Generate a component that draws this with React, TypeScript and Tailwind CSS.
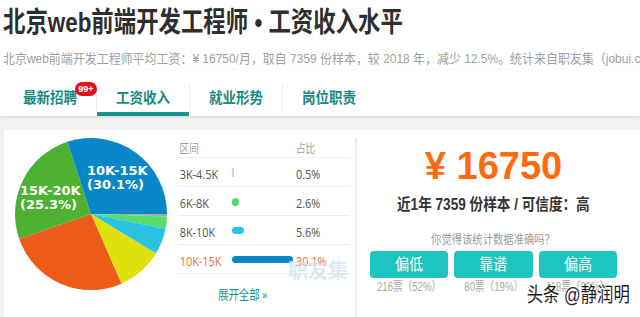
const slices = [
  { a0: 0, a1: 1.8, color: '#a9a9a9' },
  { a0: 1.8, a1: 11.2, color: '#58dc6b' },
  { a0: 11.2, a1: 31.4, color: '#2ac4e2' },
  { a0: 31.4, a1: 66.4, color: '#dfe00c' },
  { a0: 66.4, a1: 160.7, color: '#ee5a18' },
  { a0: 160.7, a1: 251.8, color: '#4db232' },
  { a0: 251.8, a1: 360, color: '#0a87c8' },
];

function slicePath(cx: number, cy: number, r: number, a0: number, a1: number) {
  const rad = (d: number) => (d * Math.PI) / 180;
  const x0 = cx + r * Math.cos(rad(a0));
  const y0 = cy + r * Math.sin(rad(a0));
  const x1 = cx + r * Math.cos(rad(a1));
  const y1 = cy + r * Math.sin(rad(a1));
  const large = a1 - a0 > 180 ? 1 : 0;
  return `M${cx},${cy} L${x0},${y0} A${r},${r} 0 ${large} 1 ${x1},${y1} Z`;
}

const rows = [
  { range: '3K-4.5K', pct: '0.5%', bar: 'w-[2px] h-[9px] bg-[#f0cbb4]', hot: false },
  { range: '6K-8K', pct: '2.6%', bar: 'w-[7px] h-[8px] rounded-full bg-[#58d86a]', hot: false },
  { range: '8K-10K', pct: '5.6%', bar: 'w-[12px] h-[7px] rounded-full bg-[#2ac4e4]', hot: false },
  { range: '10K-15K', pct: '30.1%', bar: 'w-[61px] h-[7px] rounded-full bg-[#0b87c9]', hot: true },
];

const votes = [
  { label: '偏低', count: '216票（52%）' },
  { label: '靠谱', count: '80票（19%）' },
  { label: '偏高', count: '118票（29%）' },
];

function Pie() {
  return (
    <svg width="152" height="152" viewBox="0 0 152 152">
      {slices.map((s) => (
        <path key={s.a0} d={slicePath(76, 76, 76, s.a0, s.a1)} fill={s.color} />
      ))}
      <g fill="#fff" fontFamily="DejaVu Sans" fontWeight="bold" fontSize="13">
        <text x="72" y="37">10K-15K</text>
        <text x="72" y="51">(30.1%)</text>
        <text x="5" y="57">15K-20K</text>
        <text x="5" y="71">(25.3%)</text>
      </g>
    </svg>
  );
}

export default function App() {
  return (
    <div className="h-[317px] w-[640px] overflow-hidden bg-white flex flex-col font-['Liberation_Sans','Noto_Sans_CJK_SC',sans-serif]">
      {/* Heading */}
      <div className="h-[46px] shrink-0 flex items-center pl-[3px] whitespace-nowrap">
        <h1 className="inline-block origin-left scale-x-[0.8] text-[28px] leading-none font-bold text-[#2e2e2e]">
          北京web前端开发工程师 • 工资收入水平
        </h1>
      </div>
      <div className="h-[24px] shrink-0 flex items-center pl-[3px] whitespace-nowrap">
        <p className="inline-block origin-left scale-x-[0.92] text-[13px] leading-none text-[#a0a0a0]">
          北京web前端开发工程师平均工资：¥ 16750/月，取自 7359 份样本，较 2018 年，减少 12.5%。统计来自职友集（jobui.com）
        </p>
      </div>

      {/* Tabs */}
      <div className="h-[46px] shrink-0 flex items-end pl-[4px] bg-white relative z-10 shadow-[0_1px_3px_rgba(0,0,0,0.12)]">
        <div className="relative w-[92px] h-full flex items-center justify-center pt-[15px] border-b-4 border-transparent">
          <span className="inline-block scale-x-[0.9] text-[15px] font-bold text-[#178a84]">最新招聘</span>
          <span className="absolute left-[71px] top-[12px] h-[14px] w-[22px] rounded-full bg-[#e50f16] text-white text-[9px] font-bold leading-[14px] text-center">
            99+
          </span>
        </div>
        <div className="w-px h-[27px] mb-[4px] bg-[#ebebeb]" />
        <div className="w-[92px] h-full flex items-center justify-center pt-[15px] border-b-4 border-[#15958f]">
          <span className="inline-block scale-x-[0.9] text-[15px] font-bold text-[#178a84]">工资收入</span>
        </div>
        <div className="w-px h-[27px] mb-[4px] bg-[#ebebeb]" />
        <div className="w-[92px] h-full flex items-center justify-center pt-[15px] border-b-4 border-transparent">
          <span className="inline-block scale-x-[0.9] text-[15px] font-bold text-[#178a84]">就业形势</span>
        </div>
        <div className="w-px h-[27px] mb-[4px] bg-[#ebebeb]" />
        <div className="w-[92px] h-full flex items-center justify-center pt-[15px] border-b-4 border-transparent">
          <span className="inline-block scale-x-[0.9] text-[15px] font-bold text-[#178a84]">岗位职责</span>
        </div>
      </div>

      {/* Body */}
      <div className="flex-1 bg-[#f2f2f2] pt-[14px] pl-[4px]">
        <div className="h-full bg-white flex">
          {/* Pie */}
          <div className="w-[174px] shrink-0 pl-[11px] pt-[8px]">
            <Pie />
          </div>

          {/* Distribution table */}
          <div className="w-[172px] shrink-0 pt-[10px] relative font-['Open_Sans','Noto_Sans_CJK_SC',sans-serif]">
            <div className="grid grid-cols-[54px_64px_1fr] items-center h-[18px] border-b border-[#ececec] text-[12px] text-[#a0a0a0]">
              <span className="inline-block origin-left scale-x-[0.8] pl-[2px] whitespace-nowrap">区间</span>
              <span />
              <span className="inline-block origin-left scale-x-[0.8] whitespace-nowrap">占比</span>
            </div>
            {rows.map((r) => (
              <div
                key={r.range}
                className="grid grid-cols-[54px_64px_1fr] items-center h-[29px] border-b border-[#ececec]"
              >
                <span
                  className={`inline-block origin-left scale-x-[0.84] pl-[2px] pt-[5px] text-[13px] whitespace-nowrap ${
                    r.hot ? 'text-[#f26b3b]' : 'text-[#555]'
                  }`}
                >
                  {r.range}
                </span>
                <div className="flex items-center pt-[1px]">
                  <div className={r.bar} />
                </div>
                <span
                  className={`inline-block origin-left scale-x-[0.84] pt-[5px] text-[13px] whitespace-nowrap ${
                    r.hot ? 'text-[#f26b3b]' : 'text-[#555]'
                  }`}
                >
                  {r.pct}
                </span>
              </div>
            ))}
            <div className="mt-[12px] pl-[40px] h-[18px] flex items-center">
              <span className="inline-block origin-left scale-x-[0.8] text-[13px] text-[#1f8f8a] whitespace-nowrap">
                展开全部 »
              </span>
            </div>
            <span className="absolute left-[110px] top-[131px] text-[20px] leading-none font-bold text-[#cfe2f3] opacity-70 whitespace-nowrap">
              职友集
            </span>
          </div>

          <div className="w-[2px] ml-[5px] mt-[8px] bg-[#ececec]" />

          {/* Average salary and votes */}
          <div className="flex-1 relative pl-[13px]">
            <div className="w-[247px] flex flex-col items-center pt-[14px]">
              <div className="h-[44px] leading-[44px] text-[38px] font-bold text-[#ff6a0e] whitespace-nowrap">¥ 16750</div>
              <div className="mt-[7px] h-[20px] leading-[20px] inline-block scale-x-[0.85] text-[16px] font-bold text-[#333] whitespace-nowrap">
                近1年 7359 份样本 / 可信度：高
              </div>
              <div className="mt-[17px] h-[16px] leading-[16px] inline-block scale-x-[0.86] text-[12px] text-[#9a9a9a] whitespace-nowrap">
                你觉得该统计数据准确吗？
              </div>
              <div className="mt-[3px] w-full grid grid-cols-3 gap-[6px]">
                {votes.map((v) => (
                  <div key={v.label} className="flex flex-col items-center">
                    <button className="w-full h-[27px] rounded-[4px] bg-[#1ec4bf] text-white flex items-center justify-center">
                      <span className="inline-block scale-x-[0.88] text-[16px] leading-none">{v.label}</span>
                    </button>
                    <span className="mt-[1px] h-[16px] leading-[16px] inline-block scale-x-[0.8] text-[12px] text-[#a8a8a8] whitespace-nowrap">
                      {v.count}
                    </span>
                  </div>
                ))}
              </div>
            </div>
            <span className="absolute right-[10px] bottom-[12px] inline-block origin-right scale-x-[0.82] text-[20px] leading-none text-[#1e1e1e] whitespace-nowrap [text-shadow:0_0_2px_#fff,0_0_2px_#fff,0_0_3px_#fff]">
              头条 @静润明
            </span>
          </div>
        </div>
      </div>
    </div>
  );
}
